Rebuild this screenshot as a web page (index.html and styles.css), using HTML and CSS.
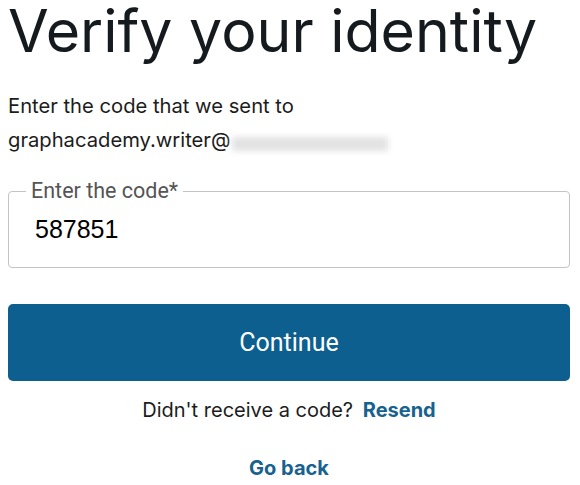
FILE: index.html
```html
<!DOCTYPE html>
<html lang="en">
<head>
<meta charset="utf-8">
<title>Verify your identity</title>
<link rel="stylesheet" href="styles.css">
</head>
<body>
<main class="page">
  <h1 class="title">Verify your identity</h1>
  <p class="intro">Enter the code that we sent to<br>graphacademy.writer@<span class="blurred" aria-hidden="true"></span></p>
  <fieldset class="field">
    <legend class="field-label">Enter the code*</legend>
    <input class="field-input" type="text" value="587851">
  </fieldset>
  <button class="primary" type="button">Continue</button>
  <p class="resend">Didn't receive a code? <a class="link" href="#">Resend</a></p>
  <p class="back"><a class="link" href="#">Go back</a></p>
</main>
</body>
</html>
```
FILE: styles.css
```css
html, body {
  margin: 0;
  padding: 0;
  background: #fff;
}
.page {
  padding: 0 10px 0 8px;
  font-family: "Inter", "Noto Sans", sans-serif;
  color: #1c1c1c;
}
.title {
  margin: -5px 0 0;
  font-family: "Inter", sans-serif;
  font-weight: 400;
  font-size: 59px;
  line-height: 72px;
  color: #151a1e;
}
.intro {
  margin: 22px 0 0;
  font-size: 20.2px;
  line-height: 34px;
  color: #1c1c1c;
}
.blurred {
  display: inline-block;
  vertical-align: -4px;
  width: 156px;
  height: 14px;
  margin-left: 2px;
  background: #e2e2e2;
  filter: blur(3px);
}
.field {
  margin: 22px 0 0;
  padding: 0 24px 22px;
  border: 1px solid #c4c4c4;
  border-radius: 4px;
}
.field-label {
  padding: 0 5px;
  margin-left: -7px;
  font-family: "Roboto", sans-serif;
  font-size: 21.5px;
  line-height: 24px;
  color: #555;
}
.field-input {
  display: block;
  box-sizing: border-box;
  height: 32px;
  border: 0;
  outline: none;
  padding: 0;
  margin: 10px 0 0 2px;
  font-family: "Liberation Sans", Arial, sans-serif;
  font-size: 25px;
  color: #000;
  width: 100%;
}
.primary {
  display: block;
  width: 100%;
  margin-top: 36px;
  height: 77px;
  border: 0;
  border-radius: 5px;
  background: #0c5f8e;
  color: #fff;
  font-family: "Roboto", sans-serif;
  font-size: 25px;
}
.resend {
  margin: 17px 0 0;
  text-align: center;
  font-size: 20px;
  line-height: 24px;
}
.link {
  color: #17628f;
  font-weight: 700;
  text-decoration: none;
  margin-left: 4px;
}
.back {
  margin: 34px 0 0;
  text-align: center;
  font-size: 20px;
  line-height: 24px;
}
.back .link { margin-left: 0; }
```
